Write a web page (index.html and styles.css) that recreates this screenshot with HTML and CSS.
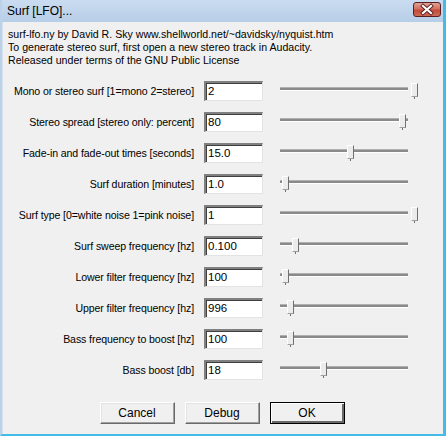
FILE: index.html
```html
<!DOCTYPE html>
<html>
<head>
<meta charset="utf-8">
<link rel="stylesheet" href="styles.css">
</head>
<body>
<div class="window">
  <div class="titlebar">
    <span class="title">Surf [LFO]...</span>
    <div class="close">
      <svg width="28" height="15" viewBox="0 0 28 15">
        <path d="M10 4 L18 11 M18 4 L10 11" stroke="#5a2020" stroke-width="4" stroke-linecap="square"/>
        <path d="M10 4 L18 11 M18 4 L10 11" stroke="#ffffff" stroke-width="2.2" stroke-linecap="square"/>
      </svg>
    </div>
  </div>
  <div class="client">
    <div class="intro">
      <div>surf-lfo.ny by David R. Sky www.shellworld.net/~davidsky/nyquist.htm</div>
      <div>To generate stereo surf, first open a new stereo track in Audacity.</div>
      <div>Released under terms of the GNU Public License</div>
    </div>
    <div class="rows">
      <label class="lbl">Mono or stereo surf [1=mono 2=stereo]</label>
      <div class="field">2</div>
      <div class="slider"><div class="track"></div><div class="thumb" style="left:131px"></div></div>

      <label class="lbl">Stereo spread [stereo only: percent]</label>
      <div class="field">80</div>
      <div class="slider"><div class="track"></div><div class="thumb" style="left:119px"></div></div>

      <label class="lbl">Fade-in and fade-out times [seconds]</label>
      <div class="field">15.0</div>
      <div class="slider"><div class="track"></div><div class="thumb" style="left:67px"></div></div>

      <label class="lbl">Surf duration [minutes]</label>
      <div class="field">1.0</div>
      <div class="slider"><div class="track"></div><div class="thumb" style="left:2px"></div></div>

      <label class="lbl">Surf type [0=white noise 1=pink noise]</label>
      <div class="field">1</div>
      <div class="slider"><div class="track"></div><div class="thumb" style="left:131px"></div></div>

      <label class="lbl">Surf sweep frequency [hz]</label>
      <div class="field">0.100</div>
      <div class="slider"><div class="track"></div><div class="thumb" style="left:12px"></div></div>

      <label class="lbl">Lower filter frequency [hz]</label>
      <div class="field">100</div>
      <div class="slider"><div class="track"></div><div class="thumb" style="left:2px"></div></div>

      <label class="lbl">Upper filter frequency [hz]</label>
      <div class="field">996</div>
      <div class="slider"><div class="track"></div><div class="thumb" style="left:7px"></div></div>

      <label class="lbl">Bass frequency to boost [hz]</label>
      <div class="field">100</div>
      <div class="slider"><div class="track"></div><div class="thumb" style="left:7px"></div></div>

      <label class="lbl">Bass boost [db]</label>
      <div class="field">18</div>
      <div class="slider"><div class="track"></div><div class="thumb" style="left:40px"></div></div>
    </div>
    <div class="buttons">
      <div class="btn">Cancel</div>
      <div class="btn">Debug</div>
      <div class="btn default">OK</div>
    </div>
  </div>
</div>
</body>
</html>
```

FILE: styles.css
```css
html, body {
  margin: 0;
  padding: 0;
  background: #f0f0f0;
}
.window {
  width: 446px;
  height: 436px;
  box-sizing: border-box;
  display: flex;
  flex-direction: column;
  font-family: "Liberation Sans", Arial, sans-serif;
  font-size: 10.6px;
  letter-spacing: -0.1px;
  color: #000;
  border-left: 2px solid #bcd2ea;
  border-right: 3px solid #43bde8;
  border-bottom: 2px solid #43bde8;
  background: #f0f0f0;
}
.titlebar {
  height: 22px;
  flex: none;
  display: flex;
  align-items: center;
  justify-content: space-between;
  background: linear-gradient(#cadcf0, #b7cee8);
  padding: 0 2px 0 5px;
}
.title {
  font-size: 12px;
  letter-spacing: 0;
  color: #000;
  padding-bottom: 1px;
}
.close {
  width: 28px;
  height: 15px;
  box-sizing: border-box;
  margin-top: -3px;
  border: 1px solid #5b1f1f;
  border-radius: 3px;
  background: linear-gradient(#e0a195 0%, #d2705e 45%, #c24a36 55%, #cc6a55 100%);
  display: flex;
  align-items: center;
  justify-content: center;
  overflow: hidden;
}
.close svg {
  flex: none;
}
.client {
  flex: 1;
  position: relative;
  background: #f0f0f0;
  border-left: 1px solid #d8e2ec;
}
.intro {
  padding: 6px 0 0 5px;
  line-height: 13px;
  letter-spacing: 0;
}
.rows {
  display: grid;
  grid-template-columns: 193px 59px 137px;
  column-gap: 8px;
  row-gap: 11px;
  grid-auto-rows: 20px;
  margin-top: 14px;
}
.rows .slider {
  margin-left: 9px;
}
.lbl {
  text-align: right;
  line-height: 20px;
  white-space: nowrap;
  padding-right: 2px;
}
.field {
  box-sizing: border-box;
  height: 20px;
  background: #fff;
  border-top: 2px solid #808080;
  border-left: 2px solid #808080;
  border-right: 1px solid #e3e3e3;
  border-bottom: 1px solid #e3e3e3;
  box-shadow: inset 1px 1px 0 #404040;
  padding: 1px 0 0 2px;
  line-height: 15px;
  font-size: 11.5px;
  letter-spacing: 0;
}
.slider {
  position: relative;
  height: 20px;
}
.track {
  position: absolute;
  left: 0;
  right: 0;
  top: 6px;
  height: 2px;
  background: #8a8a8a;
  border-top: 1px solid #b0b0b0;
  border-bottom: 1px solid #ffffff;
}
.thumb {
  position: absolute;
  top: 2px;
  width: 5px;
  height: 12px;
  background: #ececec;
  border-left: 1px solid #ffffff;
  border-top: 1px solid #ffffff;
  border-right: 1px solid #707070;
  border-bottom: 1px solid #a0a0a0;
}
.thumb::after {
  content: "";
  position: absolute;
  left: 2px;
  top: 13px;
  width: 1px;
  height: 2px;
  background: #707070;
}
.buttons {
  display: flex;
  justify-content: center;
  gap: 10px;
  margin-top: 22px;
  padding-right: 2px;
}
.btn {
  width: 75px;
  height: 22px;
  box-sizing: border-box;
  display: flex;
  align-items: center;
  justify-content: center;
  font-size: 12px;
  letter-spacing: 0;
  background: #f0f0f0;
  border-top: 1px solid #ffffff;
  border-left: 1px solid #ffffff;
  border-right: 1px solid #696969;
  border-bottom: 1px solid #696969;
  box-shadow: inset -1px -1px 0 #a0a0a0, inset 1px 1px 0 #e3e3e3;
}
.btn.default {
  border: 1px solid #000;
  box-shadow: inset 1px 1px 0 #ffffff, inset -2px -2px 0 #696969, inset -1px -1px 0 #a0a0a0;
}
```
